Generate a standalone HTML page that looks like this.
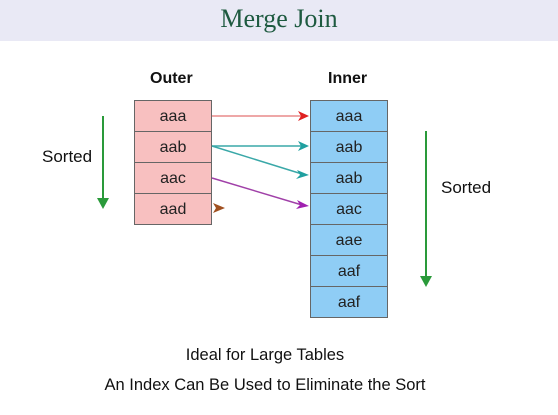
<!DOCTYPE html><html><head><style>
body{margin:0;width:558px;height:415px;background:#fff;position:relative;font-family:"Liberation Sans",sans-serif;overflow:hidden}
.hd{position:absolute;left:0;top:0;width:558px;height:41px;background:#e9e9f5}
.hd div{position:absolute;left:0;right:0;top:4px;text-align:center;font-family:"Liberation Serif",serif;font-size:26px;color:#1e5a40}
.t{position:absolute;font-size:17px;color:#111}
.c{position:absolute;width:78px;height:32px;line-height:31px;text-align:center;font-size:16px;color:#222;box-sizing:border-box;border:1px solid #666}
.o{background:#f8c0c0;left:134px}.i{background:#8fcdf5;left:310px}
</style></head><body>
<div class="hd"><div>Merge Join</div></div>
<div class="t" style="left:150px;top:70px;font-weight:bold;font-size:16px">Outer</div>
<div class="t" style="left:328px;top:70px;font-weight:bold;font-size:16px">Inner</div>
<div class="t" style="left:42px;top:147px">Sorted</div>
<div class="t" style="left:441px;top:178px">Sorted</div>
<div class="c o" style="top:100px">aaa</div><div class="c o" style="top:131px">aab</div><div class="c o" style="top:162px">aac</div><div class="c o" style="top:193px">aad</div>
<div class="c i" style="top:100px">aaa</div><div class="c i" style="top:131px">aab</div><div class="c i" style="top:162px">aab</div><div class="c i" style="top:193px">aac</div><div class="c i" style="top:224px">aae</div><div class="c i" style="top:255px">aaf</div><div class="c i" style="top:286px">aaf</div>
<svg width="558" height="415" style="position:absolute;left:0;top:0">
<g stroke-width="1.5" fill="none">
<line x1="103" y1="116" x2="103" y2="200" stroke="#2a9a3a" stroke-width="2"/>
<line x1="426" y1="131" x2="426" y2="278" stroke="#2a9a3a" stroke-width="2"/>
<line x1="212" y1="116" x2="302" y2="116" stroke="#e88a8a"/>
<line x1="212" y1="146" x2="302" y2="146" stroke="#3aa8a8"/>
<line x1="212" y1="146" x2="302" y2="174" stroke="#3aa8a8"/>
<line x1="212" y1="178" x2="302" y2="205" stroke="#a040a8"/>
</g>
<polygon points="298,111 309,116 298,121 301,116" fill="#e02020"/>
<polygon points="298,141 309,146 298,151 301,146" fill="#20a0a0"/>
<polygon points="297,170 309,175 296,179 300,175" fill="#20a0a0"/>
<polygon points="297,200 309,206 296,209 300,205" fill="#a020b0"/>
<polygon points="213,203 225,208 213,213 216,208" fill="#a05020"/>
<polygon points="97,198 109,198 103,209" fill="#2a9a3a"/>
<polygon points="420,276 432,276 426,287" fill="#2a9a3a"/>
</svg>
<div class="t" style="left:0;width:530px;text-align:center;top:346px;font-size:16.5px">Ideal for Large Tables</div>
<div class="t" style="left:0;width:530px;text-align:center;top:376px;font-size:16.5px">An Index Can Be Used to Eliminate the Sort</div>
</body></html>
